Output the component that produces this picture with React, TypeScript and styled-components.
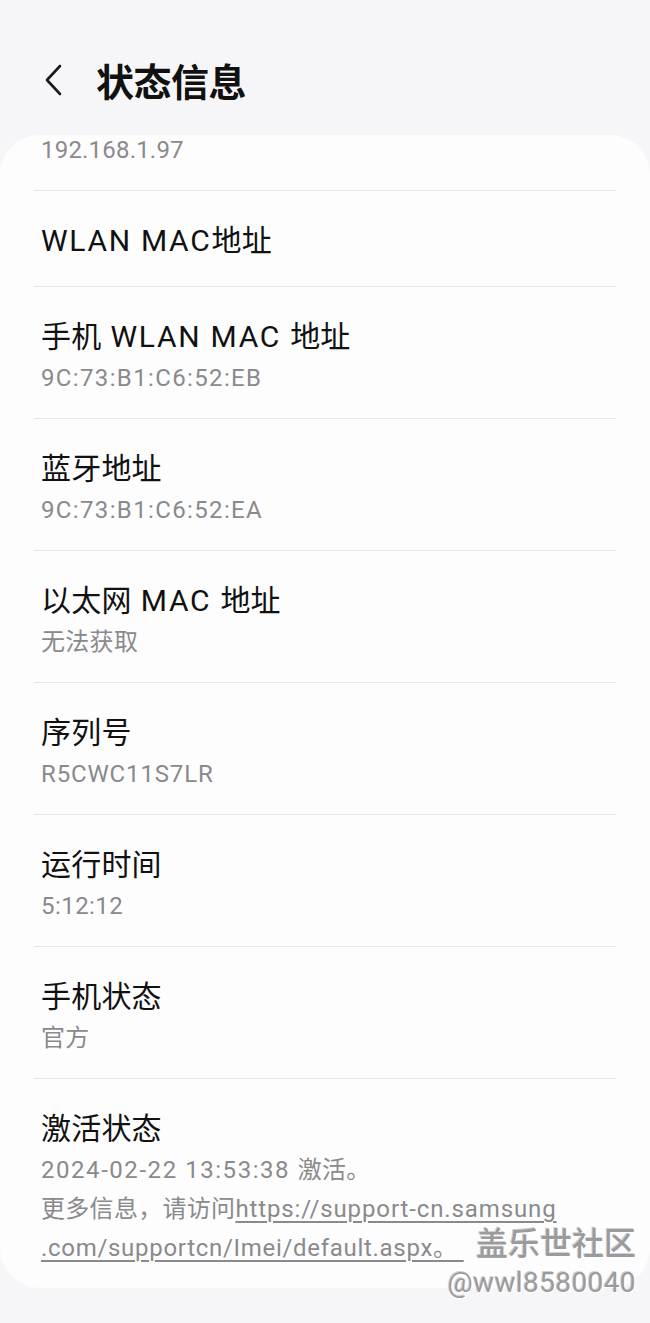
import React from 'react';
import styled, { createGlobalStyle } from 'styled-components';

const GlobalStyle = createGlobalStyle`
  html, body {
    margin: 0;
    padding: 0;
    background: #f6f6f8;
  }
  body {
    font-family: Roboto, "Noto Sans CJK SC", sans-serif;
    -webkit-font-smoothing: antialiased;
  }
`;

const Page = styled.div`
  position: relative;
  width: 650px;
  height: 1323px;
  overflow: hidden;
  background: #f6f6f8;
`;

const Header = styled.div`
  display: flex;
  align-items: center;
  height: 135px;
  padding: 24px 0 0 36px;
  box-sizing: border-box;
`;

const BackButton = styled.div`
  width: 34px;
  height: 40px;
  display: flex;
  align-items: center;
  justify-content: center;
  margin-right: 26px;
`;

const Title = styled.h1`
  margin: 0;
  font-family: "Noto Sans CJK SC", sans-serif;
  font-size: 38px;
  font-weight: 700;
  color: #111;
  letter-spacing: -0.5px;
`;

const Card = styled.div`
  background: #fdfdfe;
  border-radius: 40px;
  overflow: hidden;
`;

const Row = styled.div<{ $clipped?: boolean; $single?: boolean }>`
  margin: 0 34px;
  padding: ${p => (p.$clipped ? '0 7px 25px' : p.$single ? '31px 7px 26px' : '31px 7px 20px')};
  border-top: ${p => (p.$clipped ? 'none' : '1px solid #e7e7ea')};
`;

const RowTitle = styled.div`
  font-size: 30px;
  line-height: 38px;
  color: #111;
  letter-spacing: 0.2px;
`;

const RowValue = styled.div<{ $tight?: boolean }>`
  margin-top: ${p => (p.$tight ? '0' : '3px')};
  font-size: 24px;
  line-height: ${p => (p.$tight ? '30px' : '39px')};
  color: #8a8a8c;
  letter-spacing: 0.3px;
`;

const Latin = styled.span<{ $ls: number }>`
  letter-spacing: ${p => p.$ls}px;
`;

const Link = styled.span`
  text-decoration: underline;
  text-underline-offset: 4px;
  text-decoration-thickness: 1.5px;
`;

const Watermark = styled.div`
  position: absolute;
  right: 14px;
  bottom: 22px;
  display: flex;
  flex-direction: column;
  align-items: flex-end;
  color: #9b9b9d;
  text-shadow: 1px 1px 0 #ffffff, -1px -1px 0 #d0d0d2;
`;

const MarkBrand = styled.div`
  font-family: "Noto Sans CJK SC", sans-serif;
  font-size: 32px;
  line-height: 40px;
  font-weight: 500;
`;

const MarkUser = styled.div`
  font-size: 28px;
  line-height: 36px;
  margin-top: 4px;
  letter-spacing: 0.4px;
`;

// the Samsung font sets latin wider than Roboto, so latin runs get extra spacing
const mixed = (text: string, ls: number) =>
  text.split(/([\x20-\x7E]+)/).map((part, i) =>
    /[\x20-\x7E]/.test(part) ? (
      <Latin key={i} $ls={ls}>
        {part}
      </Latin>
    ) : (
      part
    )
  );

const TITLE_LS = 1.7;

const items = [
  { title: '手机 WLAN MAC 地址', value: '9C:73:B1:C6:52:EB', ls: 1.36 },
  { title: '蓝牙地址', value: '9C:73:B1:C6:52:EA', ls: 1.36 },
  { title: '以太网 MAC 地址', value: '无法获取', ls: 0.3 },
  { title: '序列号', value: 'R5CWC11S7LR', ls: 0.85 },
  { title: '运行时间', value: '5:12:12', ls: 0.45 },
  { title: '手机状态', value: '官方', ls: 0.3 },
];

const App: React.FC = () => {
  return (
    <Page>
      <GlobalStyle />
      <Header>
        <BackButton>
          <svg width="20" height="32" viewBox="0 0 20 32" fill="none">
            <path d="M17 2 L4 16 L17 30" stroke="#1a1a1a" strokeWidth="2.6" strokeLinecap="round" strokeLinejoin="round" />
          </svg>
        </BackButton>
        <Title>状态信息</Title>
      </Header>
      <Card>
        <Row $clipped>
          <RowValue $tight>{mixed('192.168.1.97', 0.2)}</RowValue>
        </Row>
        <Row $single>
          <RowTitle>{mixed('WLAN MAC地址', TITLE_LS)}</RowTitle>
        </Row>
        {items.map(item => (
          <Row key={item.title}>
            <RowTitle>{mixed(item.title, TITLE_LS)}</RowTitle>
            <RowValue>{mixed(item.value, item.ls)}</RowValue>
          </Row>
        ))}
        <Row>
          <RowTitle>激活状态</RowTitle>
          <RowValue>
            {mixed('2024-02-22 13:53:38 激活。', 1.55)}
            <br />
            更多信息，请访问
            <Link>
              <Latin $ls={0.88}>https://support-cn.samsung</Latin>
              <br />
              <Latin $ls={0.7}>.com/supportcn/Imei/default.aspx</Latin>。&nbsp;
            </Link>
          </RowValue>
        </Row>
      </Card>
      <Watermark>
        <MarkBrand>盖乐世社区</MarkBrand>
        <MarkUser>@wwl8580040</MarkUser>
      </Watermark>
    </Page>
  );
};

export default App;
